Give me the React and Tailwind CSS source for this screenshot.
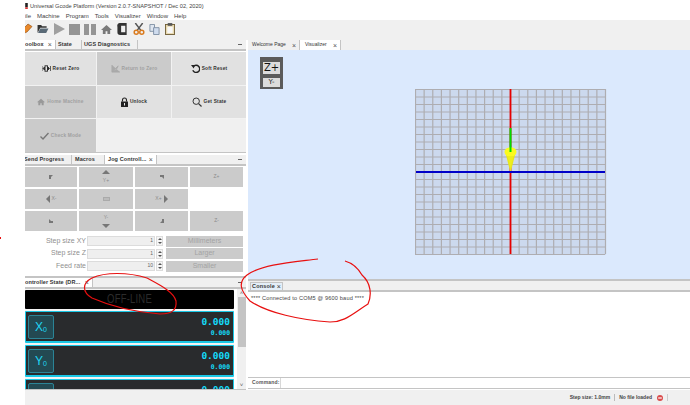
import React from "react";

const font = { fontFamily: '"Liberation Sans", Arial, sans-serif' };

function Tab({ label, active, close, w, pl = 2, normal, className = "" }) {
  return (
    <div
      style={{ width: w, paddingLeft: pl }}
      className={`flex items-center justify-between pr-[3px] h-full shrink-0 overflow-hidden border-r border-[#c4c4c4] whitespace-nowrap text-[#333] ${normal ? "text-[5px]" : "text-[5.5px] tracking-[0.1px] font-bold"} ${active ? "bg-white" : "bg-[#f0f0f0]"} ${className}`}
    >
      <span>{label}</span>
      {close && <span className="font-normal text-[7px] leading-none text-[#555]">×</span>}
    </div>
  );
}

function TabBar({ children, className = "" }) {
  return (
    <div className={`flex items-stretch bg-[#f0f0f0] border-b-2 border-[#c4c4c4] shrink-0 ${className}`}>
      {children}
      <div className="flex-1" />
      <div className="w-[10px] mr-[1px] flex items-center justify-center"><div className="w-[4px] h-px bg-[#666]" /></div>
    </div>
  );
}

const Home = ({ c = "#888", s = 9 }) => (
  <svg width={s} height={s} viewBox="0 0 12 12"><path d="M6 1 L12 6.5 H10 V11 H7 V8 H5 V11 H2 V6.5 H0 Z" fill={c} /></svg>
);

function ToolBtn({ icon, label, on, className = "" }) {
  return (
    <div className={`flex items-center justify-center gap-[2px] text-[4.8px] tracking-[0.2px] font-bold whitespace-nowrap ${on ? "bg-[#e1e1e1] text-[#333]" : "bg-[#cbcbcb] text-[#a0a0a0]"} ${className}`}>
      {icon}
      <span>{label}</span>
    </div>
  );
}

function Toolbox() {
  return (
    <div className="grid grid-cols-[71px_74px_74px] grid-rows-[33px_32px_33px] gap-px bg-[#f2f2f2] border-b border-[#c4c4c4] mt-px pr-[1px] shrink-0">
      <ToolBtn on label="Reset Zero" icon={
        <svg width="9" height="7" viewBox="0 0 9 7"><path d="M0 1 V6 M1 3.5 L2.5 2 V5 Z M8.5 1 V6 M7.5 3.5 L6 2 V5 Z" stroke="#222" strokeWidth="0.7" fill="#222" /><rect x="3" y="0.8" width="2.5" height="5.4" fill="none" stroke="#222" strokeWidth="0.9" /></svg>} />
      <ToolBtn label="Return to Zero" icon={
        <svg width="9" height="8" viewBox="0 0 10 9"><path d="M1 0 V8 H10 M2 7 L8 1 L6 5 Z" stroke="#aaa" fill="#aaa" strokeWidth="1" /></svg>} />
      <ToolBtn on label="Soft Reset" icon={
        <svg width="9" height="9" viewBox="0 0 10 10"><path d="M2.5 3 A4 4 0 1 1 2 7" fill="none" stroke="#222" strokeWidth="1.6" /><path d="M0 1 L4.5 1 L3 5 Z" fill="#222" /></svg>} />
      <ToolBtn label="Home Machine" icon={<Home c="#999" s={8} />} />
      <ToolBtn on label="Unlock" icon={
        <svg width="7" height="10" viewBox="0 0 7 10"><path d="M1.5 4.5 V3 A2 2 0 0 1 5.5 3 V4.5" fill="none" stroke="#222" strokeWidth="1.1" /><rect x="0" y="4.5" width="7" height="5.5" fill="#222" /><rect x="3" y="6" width="1" height="2.5" fill="#eee" /></svg>} />
      <ToolBtn on label="Get State" icon={
        <svg width="10" height="10" viewBox="0 0 10 10"><circle cx="4.2" cy="4.2" r="3.2" fill="none" stroke="#333" strokeWidth="1" /><path d="M6.6 6.6 L9.5 9.5" stroke="#333" strokeWidth="1.2" /></svg>} />
      <ToolBtn label="Check Mode" icon={
        <svg width="9" height="8" viewBox="0 0 9 8"><path d="M0.5 4.5 L3 7 L8.5 1" fill="none" stroke="#777" strokeWidth="1.4" /></svg>} />
      <div className="col-span-2 bg-[#f0f0f0]" />
    </div>
  );
}

function JogCell({ children }) {
  return <div className="bg-[#cbcbcb] flex items-center justify-center text-[5px] text-[#8c8c8c] gap-[2px]">{children}</div>;
}
const Corner = ({ r = 0 }) => (
  <svg width="4" height="4" viewBox="0 0 4 4" style={{ transform: `rotate(${r}deg)` }}><path d="M0 0 H4 L2 2 V4 H0 Z" fill="#777" /></svg>
);
const Tri = ({ d }) => {
  const p = { u: "M0 4 L4 0 L8 4 Z", d: "M0 0 L8 0 L4 4 Z", l: "M4 0 V8 L0 4 Z", r: "M0 0 V8 L4 4 Z" }[d];
  const wide = d === "u" || d === "d";
  return <svg width={wide ? 8 : 4} height={wide ? 4 : 8} viewBox={wide ? "0 0 8 4" : "0 0 4 8"}><path d={p} fill="#777" /></svg>;
};

function Jog() {
  return (
    <div className="grid grid-cols-[52px_54px_53px_53px] grid-rows-[20px_20px_20px] gap-[2px] mt-px shrink-0">
      <JogCell><Corner /></JogCell>
      <JogCell><div className="flex flex-col items-center gap-[3px]"><Tri d="u" /><span>Y+</span></div></JogCell>
      <JogCell><Corner r={90} /></JogCell>
      <JogCell>Z+</JogCell>
      <JogCell><Tri d="l" /><span>X-</span></JogCell>
      <JogCell><div className="w-[7px] h-[4px] border border-[#aaa] bg-[#bbb]" /></JogCell>
      <JogCell><span>X+</span><Tri d="r" /></JogCell>
      <div />
      <JogCell><Corner r={270} /></JogCell>
      <JogCell><div className="flex flex-col items-center gap-[3px]"><span>Y-</span><Tri d="d" /></div></JogCell>
      <JogCell><Corner r={180} /></JogCell>
      <JogCell>Z-</JogCell>
    </div>
  );
}

function StepRow({ label, value, btn }) {
  return (
    <div className="flex items-center h-[10px] text-[7px] text-[#8f8f8f]">
      <div className="w-[61px] text-right whitespace-nowrap">{label}</div>
      <div className="w-[68px] h-[10px] ml-px bg-[#efefef] border border-[#dcdcdc] flex items-center justify-end pr-[1px] text-[5px] text-[#666]">{value}</div>
      <div className="w-[7px] h-[10px] ml-px flex flex-col items-center justify-center gap-[2px] bg-[#f6f6f6] border border-[#dcdcdc]">
        <div className="w-0 h-0 border-x-[2px] border-x-transparent border-b-[2px] border-b-[#555]" />
        <div className="w-0 h-0 border-x-[2px] border-x-transparent border-t-[2px] border-t-[#555]" />
      </div>
      <div className="w-[77px] h-[11px] ml-[3px] bg-[#cbcbcb] flex items-center justify-center text-[7px] text-[#a3a3a3]">{btn}</div>
    </div>
  );
}

function Dro({ axis }) {
  return (
    <div className="h-[32px] bg-[#292b2d] border border-[#19c8e6] border-b-2 rounded-[1px] flex items-center pl-[2px] pr-[3px] shrink-0">
      <div className="w-[26px] h-[24px] bg-[#234952] border border-[#2b8496] rounded-[2px] flex items-center justify-center text-[#1fd5f2] text-[12px] leading-none">
        <span>{axis}</span><span className="text-[7px] leading-none mt-[6px]">0</span>
      </div>
      <div className="flex-1" />
      <div className="flex flex-col items-end text-[#14dcfb] leading-none" style={{ fontFamily: '"DejaVu Sans Mono", monospace' }}>
        <span className="text-[9.5px] font-bold">0.000</span>
        <span className="text-[6.4px] font-bold mt-[4px]">0.000</span>
      </div>
    </div>
  );
}

function Controller() {
  return (
    <div className="flex h-[101px] bg-white border-b border-[#c4c4c4] overflow-hidden shrink-0">
      <div className="w-[209px] flex flex-col gap-[2px] pt-px overflow-hidden bg-[#f4f4f4]">
        <div className="h-[19px] bg-black rounded-[1px] shrink-0 flex items-center justify-center">
          <span className="text-[9.5px] text-[#2c2c2c] scale-y-[1.35] tracking-[0.2px]">OFF-LINE</span>
        </div>
        <Dro axis="X" />
        <Dro axis="Y" />
        <Dro axis="Z" />
      </div>
      <div className="w-[9px] ml-[3px] flex flex-col items-center bg-[#f0f0f0]">
        <div className="h-[8px] text-[5px] text-[#555] leading-[8px]">˄</div>
        <div className="w-[8px] h-[50px] bg-[#c4c4c4]" />
        <div className="flex-1" />
        <div className="h-[8px] text-[6px] text-[#555] leading-[8px]">˅</div>
      </div>
    </div>
  );
}

function GridDrawing() {
  const W = 190, H = 165, cols = 22, rows = 22;
  const lines = [];
  for (let i = 0; i <= cols; i++) {
    const x = (i * W) / cols + 0.5;
    lines.push(<line key={"v" + i} x1={x} y1="0" x2={x} y2={H} stroke="#aeadb1" strokeWidth="1.2" />);
  }
  for (let i = 0; i <= rows; i++) {
    const y = (i * H) / rows + 0.5;
    lines.push(<line key={"h" + i} x1="0" y1={y} x2={W} y2={y} stroke="#aeadb1" strokeWidth="1.2" />);
  }
  return (
    <svg width={W + 2} height={H + 1} viewBox={`0 0 ${W + 2} ${H + 1}`}>
      <rect width={W + 1} height={H + 1} fill="#ccd9ee" />
      {lines}
      <line x1="95.5" y1="0" x2="95.5" y2={H} stroke="#e60000" strokeWidth="1.8" />
      <line x1="1" y1="83" x2={W} y2="83" stroke="#0000c8" strokeWidth="1.8" />
      <path d="M90.5 64 L100.5 64 L96 82 L95 82 Z" fill="#e6e61c" />
      <ellipse cx="95.5" cy="63" rx="6" ry="4.8" fill="#fbfb1e" />
      <path d="M92.5 67 L98.5 67 L95.5 79 Z" fill="#eeee1c" />
      <line x1="95.5" y1="39" x2="95.5" y2="63" stroke="#00dc00" strokeWidth="2" />
    </svg>
  );
}

function ZoomWidget() {
  return (
    <div className="w-[23px] h-[32px] bg-[#5b5b5b] px-[3px] pt-[5px] pb-[2px] flex flex-col gap-[4px] items-stretch">
      <div className="h-[12px] bg-[#dcdcdc] flex items-center justify-center text-[10px] leading-none text-[#111]" style={{ fontFamily: '"DejaVu Sans", sans-serif' }}>Z+</div>
      <div className="flex-1 bg-[#dcdcdc] flex items-center justify-center text-[7px] leading-none text-[#222]" style={{ fontFamily: '"DejaVu Sans", sans-serif' }}>Y-</div>
    </div>
  );
}

function Icons() {
  return (
    <div className="h-[20px] bg-[#f0f0f0] flex items-center pb-[2px] overflow-hidden shrink-0">
      <svg className="ml-[-5px] shrink-0" width="13" height="12" viewBox="0 0 13 12"><path d="M1 11.5 L3 6 L8 1 L12 3.5 L7 9 Z" fill="#e8892b" stroke="#8a4a10" strokeWidth="0.6" /></svg>
      <svg width="12" height="10" viewBox="0 0 12 11" className="ml-[4px] shrink-0"><path d="M0 1 H4 L5 2.5 H10 V4 H3 L0 10 Z" fill="#333" /><path d="M3 5 H12 L9.5 10 H0.5 Z" fill="#5a6a77" /></svg>
      <svg width="11" height="12" viewBox="0 0 11 12" className="ml-[5px] shrink-0"><path d="M0 0 L11 6 L0 12 Z" fill="#a0a0a0" /></svg>
      <div className="w-[11px] h-[11px] bg-[#959595] ml-[4px] shrink-0" />
      <div className="flex gap-[2px] ml-[4px] shrink-0"><div className="w-[5px] h-[11px] bg-[#959595]" /><div className="w-[5px] h-[11px] bg-[#959595]" /></div>
      <div className="ml-[5px] shrink-0"><Home c="#7a7a7a" s={11} /></div>
      <svg width="11" height="12" viewBox="0 0 11 13" className="ml-[5px] shrink-0"><path d="M3 0 H10 V13 H3 A3 3 0 0 1 0 10 V4 A3 3 0 0 1 3 0 Z" fill="#333" /><rect x="4" y="3" width="4.5" height="7" fill="#f0f0f0" /></svg>
      <svg width="12" height="12" viewBox="0 0 12 13" className="ml-[5px] shrink-0"><path d="M2 0 L8 8 M10 0 L4 8" stroke="#555" strokeWidth="1.6" /><circle cx="3" cy="10" r="2.2" fill="none" stroke="#d97a1e" strokeWidth="1.6" /><circle cx="9" cy="10" r="2.2" fill="none" stroke="#d97a1e" strokeWidth="1.6" /></svg>
      <svg width="11" height="11" viewBox="0 0 12 12" className="ml-[4px] shrink-0"><path d="M1 0.5 H6 V8 H1 Z" fill="#dfe6f0" stroke="#7d8ea3" /><path d="M5 4 H11 V11.5 H5 Z" fill="#cfdcee" stroke="#7d8ea3" /></svg>
      <svg width="10" height="12" viewBox="0 0 11 13" className="ml-[5px] shrink-0"><rect x="0.5" y="1.5" width="10" height="11" fill="#e8d9b0" stroke="#6d5c33" /><rect x="2.5" y="4" width="6" height="7" fill="#f7f7f7" /><rect x="3" y="0" width="5" height="3" fill="#555" /></svg>
    </div>
  );
}

export default function App() {
  return (
    <div className="relative w-[690px] h-[405px] bg-white flex overflow-hidden text-[#333]" style={font}>
      <div className="w-[25px] shrink-0" />
      <div className="w-[665px] flex flex-col overflow-hidden">
        <div className="h-[12px] flex items-center text-[5.65px] text-[#444] whitespace-nowrap shrink-0">
          <svg width="3" height="6" viewBox="0 0 3 7" className="shrink-0"><rect width="3" height="5" fill="#222" /><rect y="5" width="3" height="2" fill="#d33" /></svg>
          <span className="ml-[2px]">Universal Gcode Platform (Version 2.0.7-SNAPSHOT / Dec 02, 2020)</span>
        </div>
        <div className="h-[8px] flex items-center text-[6px] text-[#444] gap-[6px] whitespace-nowrap shrink-0">
          <span>ile</span><span>Machine</span><span>Program</span><span>Tools</span><span>Visualizer</span><span>Window</span><span>Help</span>
        </div>
        <Icons />
        <div className="h-[350px] flex shrink-0">
          <div className="w-[221px] flex flex-col shrink-0 overflow-hidden">
            <TabBar className="h-[11px]">
              <Tab active label="oolbox" close w={31} pl={0} />
              <Tab label="State" w={26} />
              <Tab label="UGS Diagnostics" w={56} />
            </TabBar>
            <Toolbox />
            <TabBar className="h-[11px] mt-[2px]">
              <Tab label="Send Progress" w={48} pl={0} className="ml-[-1px]" />
              <Tab label="Macros" w={33} pl={3} />
              <Tab active label="Jog Controll..." close w={52} pl={3} />
            </TabBar>
            <Jog />
            <div className="flex flex-col gap-[2.5px] mt-[5px] mb-[5px] shrink-0">
              <StepRow label="Step size XY" value="1" btn="Millimeters" />
              <StepRow label="Step size Z" value="1" btn="Larger" />
              <StepRow label="Feed rate" value="10" btn="Smaller" />
            </div>
            <div className="h-[2px] bg-[#c4c4c4] shrink-0" />
            <TabBar className="h-[11px]">
              <Tab active label="ontroller State (DR..." close w={68} pl={0} />
            </TabBar>
            <Controller />
          </div>
          <div className="flex-1 flex flex-col ml-[2px] min-w-0">
            <div className="h-[10px] flex bg-[#f0f0f0] items-stretch shrink-0">
              <Tab label="Welcome Page" close normal w={52} pl={4} />
              <Tab active label="Visualizer" close normal w={41} pl={5} />
            </div>
            <div className="h-[231px] bg-[#dbe9fd] relative flex items-start shrink-0 border-b-2 border-[#c4c4c4] pt-[39px] pl-[167px]">
              <div className="absolute left-[12px] top-[7px]"><ZoomWidget /></div>
              <GridDrawing />
            </div>
            <div className="h-[11px] flex bg-[#f0f0f0] border-b-2 border-[#c4c4c4] shrink-0 pl-[2px] pt-[1px]">
              <div className="flex items-center justify-between w-[33px] bg-[#e4eef8] px-[1px] text-[5.5px] tracking-[0.2px] font-bold border-x border-t border-[#c4c4c4]">Console<span className="font-normal text-[7px] leading-none">×</span></div>
            </div>
            <div className="flex-1 bg-white px-[3px] pt-[2px] text-[5.6px] tracking-[0.16px] text-[#444] whitespace-nowrap">**** Connected to COM5 @ 9600 baud ****</div>
            <div className="h-[12px] bg-white border-y border-[#c4c4c4] flex items-center shrink-0">
              <span className="text-[5px] tracking-[0.2px] pl-[4px] w-[32px] font-bold text-[#555] whitespace-nowrap">Command:</span>
              <div className="flex-1 h-full border-l border-[#d8d8d8]" />
            </div>
            <div className="h-[1px] shrink-0" />
          </div>
        </div>
        <div className="flex-1 bg-[#f0f0f0] flex items-center justify-end gap-[4px] pr-[22px] text-[5px] text-[#444] font-bold whitespace-nowrap">
          <span>Step size: 1.0mm</span>
          <div className="w-px h-[7px] bg-[#bbb]" />
          <span>No file loaded</span>
          <svg width="6" height="6" viewBox="0 0 7 7" className="ml-[1px]"><circle cx="3.5" cy="3.5" r="3.5" fill="#d94b4b" /><rect x="1.4" y="2.8" width="4.2" height="1.4" fill="#fff" /></svg>
          <div className="w-px h-[7px] bg-[#ccc]" />
        </div>
      </div>
      <svg className="absolute inset-0 pointer-events-none" width="690" height="405" viewBox="0 0 690 405" fill="none">
        <path d="M147 278 C128 272 105 272 92 278 C82 283 82 292 92 298 C110 306 135 312 160 314 C172 314 177 310 176 301 C174 292 160 285 147 278" stroke="#e81010" strokeWidth="1.2" />
        <path d="M318 259 C295 262 262 264 247 275 C238 282 240 290 250 301 C268 313 300 320 330 322 C345 322 352 314 368 304 C372 295 371 283 362 275 C358 268 352 263 345 261" stroke="#e81010" strokeWidth="1.2" />
        <rect x="0" y="237" width="1" height="2" fill="#e81010" />
      </svg>
    </div>
  );
}
